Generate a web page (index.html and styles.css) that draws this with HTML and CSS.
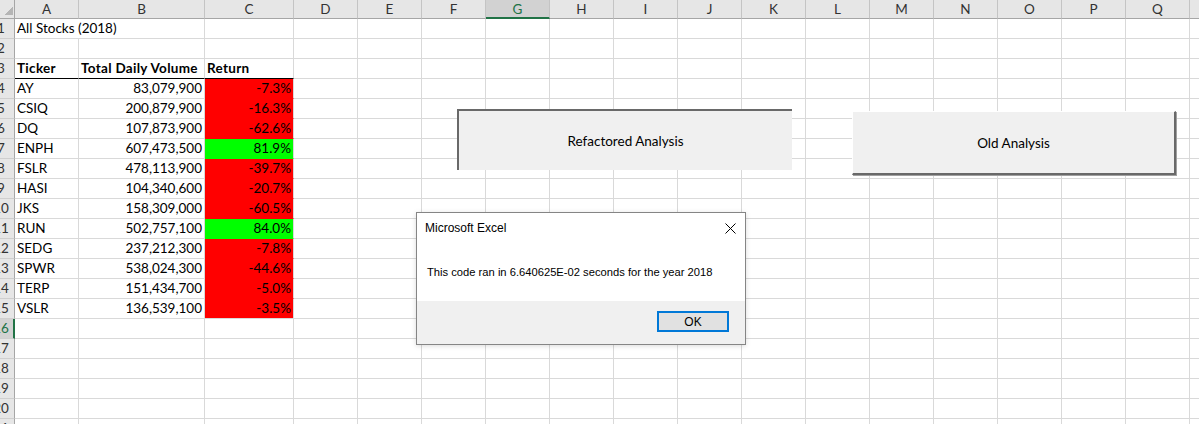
FILE: index.html
```html
<!DOCTYPE html>
<html>
<head>
<meta charset="utf-8">
<link rel="stylesheet" href="styles.css">
</head>
<body>
<div class="sheet">
  <div class="grid">
    <div class="c corner"></div>
    <div class="c ch">A</div><div class="c ch">B</div><div class="c ch">C</div><div class="c ch">D</div><div class="c ch">E</div><div class="c ch">F</div><div class="c ch active-col">G</div><div class="c ch">H</div><div class="c ch">I</div><div class="c ch">J</div><div class="c ch">K</div><div class="c ch">L</div><div class="c ch">M</div><div class="c ch">N</div><div class="c ch">O</div><div class="c ch">P</div><div class="c ch">Q</div><div class="c ch">R</div>

    <div class="c rh"><span>1</span></div><div class="c t span2">All Stocks (2018)</div><div class="c"></div><div class="c"></div><div class="c"></div><div class="c"></div><div class="c"></div><div class="c"></div><div class="c"></div><div class="c"></div><div class="c"></div><div class="c"></div><div class="c"></div><div class="c"></div><div class="c"></div><div class="c"></div><div class="c"></div><div class="c"></div>

    <div class="c rh"><span>2</span></div><div class="c"></div><div class="c"></div><div class="c"></div><div class="c"></div><div class="c"></div><div class="c"></div><div class="c"></div><div class="c"></div><div class="c"></div><div class="c"></div><div class="c"></div><div class="c"></div><div class="c"></div><div class="c"></div><div class="c"></div><div class="c"></div><div class="c"></div><div class="c"></div>

    <div class="c rh"><span>3</span></div><div class="c t b u">Ticker</div><div class="c t b u">Total Daily Volume</div><div class="c t b u">Return</div><div class="c"></div><div class="c"></div><div class="c"></div><div class="c"></div><div class="c"></div><div class="c"></div><div class="c"></div><div class="c"></div><div class="c"></div><div class="c"></div><div class="c"></div><div class="c"></div><div class="c"></div><div class="c"></div><div class="c"></div>

    <div class="c rh"><span>4</span></div><div class="c t">AY</div><div class="c n">83,079,900</div><div class="c n red">-7.3%</div><div class="c"></div><div class="c"></div><div class="c"></div><div class="c"></div><div class="c"></div><div class="c"></div><div class="c"></div><div class="c"></div><div class="c"></div><div class="c"></div><div class="c"></div><div class="c"></div><div class="c"></div><div class="c"></div><div class="c"></div>

    <div class="c rh"><span>5</span></div><div class="c t">CSIQ</div><div class="c n">200,879,900</div><div class="c n red">-16.3%</div><div class="c"></div><div class="c"></div><div class="c"></div><div class="c"></div><div class="c"></div><div class="c"></div><div class="c"></div><div class="c"></div><div class="c"></div><div class="c"></div><div class="c"></div><div class="c"></div><div class="c"></div><div class="c"></div><div class="c"></div>

    <div class="c rh"><span>6</span></div><div class="c t">DQ</div><div class="c n">107,873,900</div><div class="c n red">-62.6%</div><div class="c"></div><div class="c"></div><div class="c"></div><div class="c"></div><div class="c"></div><div class="c"></div><div class="c"></div><div class="c"></div><div class="c"></div><div class="c"></div><div class="c"></div><div class="c"></div><div class="c"></div><div class="c"></div><div class="c"></div>

    <div class="c rh"><span>7</span></div><div class="c t">ENPH</div><div class="c n">607,473,500</div><div class="c n green">81.9%</div><div class="c"></div><div class="c"></div><div class="c"></div><div class="c"></div><div class="c"></div><div class="c"></div><div class="c"></div><div class="c"></div><div class="c"></div><div class="c"></div><div class="c"></div><div class="c"></div><div class="c"></div><div class="c"></div><div class="c"></div>

    <div class="c rh"><span>8</span></div><div class="c t">FSLR</div><div class="c n">478,113,900</div><div class="c n red">-39.7%</div><div class="c"></div><div class="c"></div><div class="c"></div><div class="c"></div><div class="c"></div><div class="c"></div><div class="c"></div><div class="c"></div><div class="c"></div><div class="c"></div><div class="c"></div><div class="c"></div><div class="c"></div><div class="c"></div><div class="c"></div>

    <div class="c rh"><span>9</span></div><div class="c t">HASI</div><div class="c n">104,340,600</div><div class="c n red">-20.7%</div><div class="c"></div><div class="c"></div><div class="c"></div><div class="c"></div><div class="c"></div><div class="c"></div><div class="c"></div><div class="c"></div><div class="c"></div><div class="c"></div><div class="c"></div><div class="c"></div><div class="c"></div><div class="c"></div><div class="c"></div>

    <div class="c rh"><span>10</span></div><div class="c t">JKS</div><div class="c n">158,309,000</div><div class="c n red">-60.5%</div><div class="c"></div><div class="c"></div><div class="c"></div><div class="c"></div><div class="c"></div><div class="c"></div><div class="c"></div><div class="c"></div><div class="c"></div><div class="c"></div><div class="c"></div><div class="c"></div><div class="c"></div><div class="c"></div><div class="c"></div>

    <div class="c rh"><span>11</span></div><div class="c t">RUN</div><div class="c n">502,757,100</div><div class="c n green">84.0%</div><div class="c"></div><div class="c"></div><div class="c"></div><div class="c"></div><div class="c"></div><div class="c"></div><div class="c"></div><div class="c"></div><div class="c"></div><div class="c"></div><div class="c"></div><div class="c"></div><div class="c"></div><div class="c"></div><div class="c"></div>

    <div class="c rh"><span>12</span></div><div class="c t">SEDG</div><div class="c n">237,212,300</div><div class="c n red">-7.8%</div><div class="c"></div><div class="c"></div><div class="c"></div><div class="c"></div><div class="c"></div><div class="c"></div><div class="c"></div><div class="c"></div><div class="c"></div><div class="c"></div><div class="c"></div><div class="c"></div><div class="c"></div><div class="c"></div><div class="c"></div>

    <div class="c rh"><span>13</span></div><div class="c t">SPWR</div><div class="c n">538,024,300</div><div class="c n red">-44.6%</div><div class="c"></div><div class="c"></div><div class="c"></div><div class="c"></div><div class="c"></div><div class="c"></div><div class="c"></div><div class="c"></div><div class="c"></div><div class="c"></div><div class="c"></div><div class="c"></div><div class="c"></div><div class="c"></div><div class="c"></div>

    <div class="c rh"><span>14</span></div><div class="c t">TERP</div><div class="c n">151,434,700</div><div class="c n red">-5.0%</div><div class="c"></div><div class="c"></div><div class="c"></div><div class="c"></div><div class="c"></div><div class="c"></div><div class="c"></div><div class="c"></div><div class="c"></div><div class="c"></div><div class="c"></div><div class="c"></div><div class="c"></div><div class="c"></div><div class="c"></div>

    <div class="c rh"><span>15</span></div><div class="c t">VSLR</div><div class="c n">136,539,100</div><div class="c n red last">-3.5%</div><div class="c"></div><div class="c"></div><div class="c"></div><div class="c"></div><div class="c"></div><div class="c"></div><div class="c"></div><div class="c"></div><div class="c"></div><div class="c"></div><div class="c"></div><div class="c"></div><div class="c"></div><div class="c"></div><div class="c"></div>

    <div class="c rh active-row"><span>16</span></div><div class="c"></div><div class="c"></div><div class="c"></div><div class="c"></div><div class="c"></div><div class="c"></div><div class="c"></div><div class="c"></div><div class="c"></div><div class="c"></div><div class="c"></div><div class="c"></div><div class="c"></div><div class="c"></div><div class="c"></div><div class="c"></div><div class="c"></div><div class="c"></div>

    <div class="c rh"><span>17</span></div><div class="c"></div><div class="c"></div><div class="c"></div><div class="c"></div><div class="c"></div><div class="c"></div><div class="c"></div><div class="c"></div><div class="c"></div><div class="c"></div><div class="c"></div><div class="c"></div><div class="c"></div><div class="c"></div><div class="c"></div><div class="c"></div><div class="c"></div><div class="c"></div>

    <div class="c rh"><span>18</span></div><div class="c"></div><div class="c"></div><div class="c"></div><div class="c"></div><div class="c"></div><div class="c"></div><div class="c"></div><div class="c"></div><div class="c"></div><div class="c"></div><div class="c"></div><div class="c"></div><div class="c"></div><div class="c"></div><div class="c"></div><div class="c"></div><div class="c"></div><div class="c"></div>

    <div class="c rh"><span>19</span></div><div class="c"></div><div class="c"></div><div class="c"></div><div class="c"></div><div class="c"></div><div class="c"></div><div class="c"></div><div class="c"></div><div class="c"></div><div class="c"></div><div class="c"></div><div class="c"></div><div class="c"></div><div class="c"></div><div class="c"></div><div class="c"></div><div class="c"></div><div class="c"></div>

    <div class="c rh"><span>20</span></div><div class="c"></div><div class="c"></div><div class="c"></div><div class="c"></div><div class="c"></div><div class="c"></div><div class="c"></div><div class="c"></div><div class="c"></div><div class="c"></div><div class="c"></div><div class="c"></div><div class="c"></div><div class="c"></div><div class="c"></div><div class="c"></div><div class="c"></div><div class="c"></div>

    <div class="c rh"><span>21</span></div><div class="c"></div><div class="c"></div><div class="c"></div><div class="c"></div><div class="c"></div><div class="c"></div><div class="c"></div><div class="c"></div><div class="c"></div><div class="c"></div><div class="c"></div><div class="c"></div><div class="c"></div><div class="c"></div><div class="c"></div><div class="c"></div><div class="c"></div><div class="c"></div>
  </div>

  <button class="btn btn-refactored">Refactored Analysis</button>
  <button class="btn btn-old">Old Analysis</button>

  <div class="dialog">
    <div class="dlg-title">
      <span>Microsoft Excel</span>
      <svg class="dlg-close" width="11" height="11" viewBox="0 0 11 11"><path d="M0.5 0.5 L10.5 10.5 M10.5 0.5 L0.5 10.5" stroke="#000" stroke-width="1" fill="none"/></svg>
    </div>
    <div class="dlg-msg">This code ran in 6.640625E-02 seconds for the year 2018</div>
    <div class="dlg-foot"><button class="ok">OK</button></div>
  </div>
</div>
</body>
</html>
```

FILE: styles.css
```css
html, body {
  margin: 0;
  padding: 0;
  background: #ffffff;
  overflow: hidden;
}

.sheet {
  position: relative;
  width: 1199px;
  height: 424px;
  overflow: hidden;
  font-family: Lato, "Liberation Sans", sans-serif;
  font-size: 13.5px;
  color: #000;
}

.grid {
  display: grid;
  grid-template-columns: 15px 64px 126px 89px repeat(15, 64px);
  grid-template-rows: 19px repeat(21, 20px);
  width: 1254px;
}

.c {
  box-sizing: border-box;
  border-right: 1px solid #d9d9d9;
  border-bottom: 1px solid #d9d9d9;
  background: #ffffff;
  line-height: 19px;
  white-space: nowrap;
  padding: 0 2px;
}

.span2 { grid-column: span 2; }
.t { text-align: left; }
.n { text-align: right; }
.b { font-weight: 700; letter-spacing: 0.3px; }
.u { border-bottom-color: #000000; }

.red {
  background: #ff0000;
  border-bottom-color: #ff0000;
}
.green {
  background: #00ff00;
  border-bottom-color: #00ff00;
}
.red.last { border-bottom-color: #d9d9d9; }

.ch {
  background: #e6e6e6;
  border-right-color: #c4c4c4;
  border-bottom-color: #a6a6a6;
  text-align: center;
  color: #333333;
  line-height: 18px;
  padding: 0;
}

.active-col {
  background: #d2d2d2;
  color: #217346;
  border-bottom: 2px solid #217346;
}

.corner {
  background: #e6e6e6 linear-gradient(135deg, transparent 60%, #b5b5b5 60%) no-repeat;
  background-size: 10px 11px;
  background-position: 3px 4px;
  border-right-color: #a6a6a6;
  border-bottom-color: #a6a6a6;
  padding: 0;
}

.rh {
  background: #e6e6e6;
  border-right-color: #a6a6a6;
  border-bottom-color: #cfcfcf;
  color: #333333;
  padding: 0;
  overflow: hidden;
}
.rh span {
  display: block;
  width: 26px;
  margin-left: -12px;
  text-align: center;
}
.active-row {
  background: #d2d2d2;
  color: #217346;
  border-right: 2px solid #217346;
}

.btn {
  position: absolute;
  box-sizing: border-box;
  margin: 0;
  padding: 0;
  background: #f0f0f0;
  font-family: Lato, "Liberation Sans", sans-serif;
  font-size: 13.5px;
  color: #000;
  border: 0;
}
.btn-refactored {
  left: 457px;
  top: 109px;
  width: 335px;
  height: 61px;
  border-top: 2px solid #696969;
  border-left: 2px solid #696969;
}
.btn-old {
  left: 852px;
  top: 111px;
  width: 324px;
  height: 64px;
  border-top: 1px solid #ffffff;
  border-left: 1px solid #ffffff;
  border-right: 2px solid #696969;
  border-bottom: 2px solid #696969;
  box-shadow: 1px 1px 0 #a0a0a0;
}

.dialog {
  position: absolute;
  left: 416px;
  top: 212px;
  width: 330px;
  height: 133px;
  box-sizing: border-box;
  border: 1px solid #858585;
  background: #ffffff;
  box-shadow: 0 1px 5px rgba(0, 0, 0, 0.15);
  font-family: "Liberation Sans", Arial, sans-serif;
  font-size: 11.2px;
  color: #000;
  display: flex;
  flex-direction: column;
}
.dlg-title {
  height: 30px;
  display: flex;
  align-items: center;
  justify-content: space-between;
  padding: 0 9px 0 8px;
  font-size: 12px;
}
.dlg-close { display: block; }
.dlg-msg {
  height: 58px;
  display: flex;
  align-items: center;
  padding-left: 10px;
}
.dlg-foot {
  flex: 1;
  background: #f0f0f0;
  display: flex;
  justify-content: flex-end;
  align-items: flex-start;
  padding: 10px 16px 0 0;
}
.ok {
  box-sizing: border-box;
  width: 72px;
  height: 21px;
  margin: 0;
  padding: 0;
  border: 2px solid #0078d7;
  background: #e1e1e1;
  font-family: "Liberation Sans", Arial, sans-serif;
  font-size: 12px;
  color: #000;
}
```
